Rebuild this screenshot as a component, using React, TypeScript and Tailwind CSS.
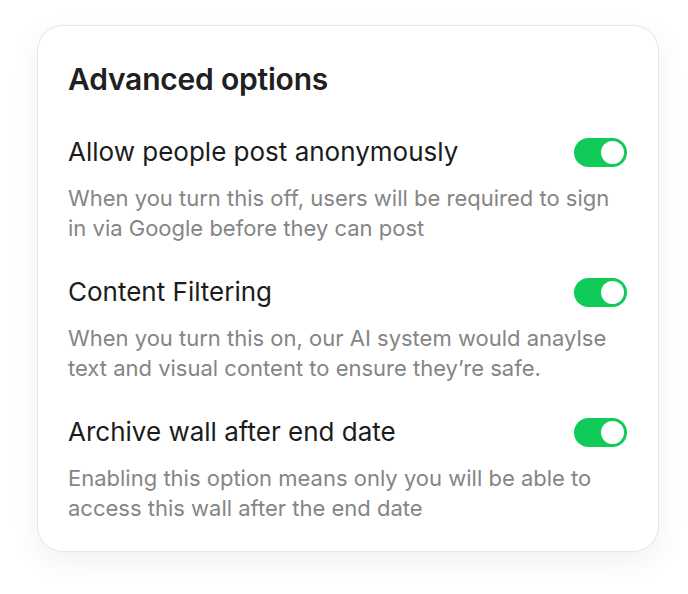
import React from 'react';

type Option = {
	title: string;
	description: string;
	enabled: boolean;
};

const options: Option[] = [
	{
		title: 'Allow people post anonymously',
		description: 'When you turn this off, users will be required to sign in via Google before they can post',
		enabled: true,
	},
	{
		title: 'Content Filtering',
		description: 'When you turn this on, our AI system would anaylse text and visual content to ensure they’re safe.',
		enabled: true,
	},
	{
		title: 'Archive wall after end date',
		description: 'Enabling this option means only you will be able to access this wall after the end date',
		enabled: true,
	},
];

const Toggle: React.FC<{ on: boolean }> = ({ on }) => (
	<div
		className={`flex h-[29px] w-[53px] shrink-0 items-center rounded-full p-[3px] ${
			on ? 'justify-end bg-[#10cb57]' : 'justify-start bg-gray-300'
		}`}
	>
		<div className="h-[23px] w-[23px] rounded-full bg-white" />
	</div>
);

const App: React.FC = () => {
	return (
		<div className="min-h-[594px] w-full bg-white pl-[37px] pt-[25px] font-['Inter',sans-serif]">
			<div className="w-[622px] rounded-[26px] border border-[#e6e6e6] bg-white px-[30px] pb-[28px] pt-[37px] shadow-[0_10px_30px_rgba(0,0,0,0.06)]">
				<h1 className="text-[30px] font-semibold leading-[32px] tracking-[-0.2px] text-[#202020]">
					Advanced options
				</h1>

				<div className="mt-[41px] flex flex-col gap-[33px]">
					{options.map((opt) => (
						<section key={opt.title}>
							<div className="flex items-center justify-between pr-[1px]">
								<h2 className="text-[26px] font-normal leading-[32px] text-[#1c1c1c]">
									{opt.title}
								</h2>
								<Toggle on={opt.enabled} />
							</div>
							<p className="mt-[15px] pr-[10px] text-[22px] leading-[30px] text-[#858585]">
								{opt.description}
							</p>
						</section>
					))}
				</div>
			</div>
		</div>
	);
};

export default App;
